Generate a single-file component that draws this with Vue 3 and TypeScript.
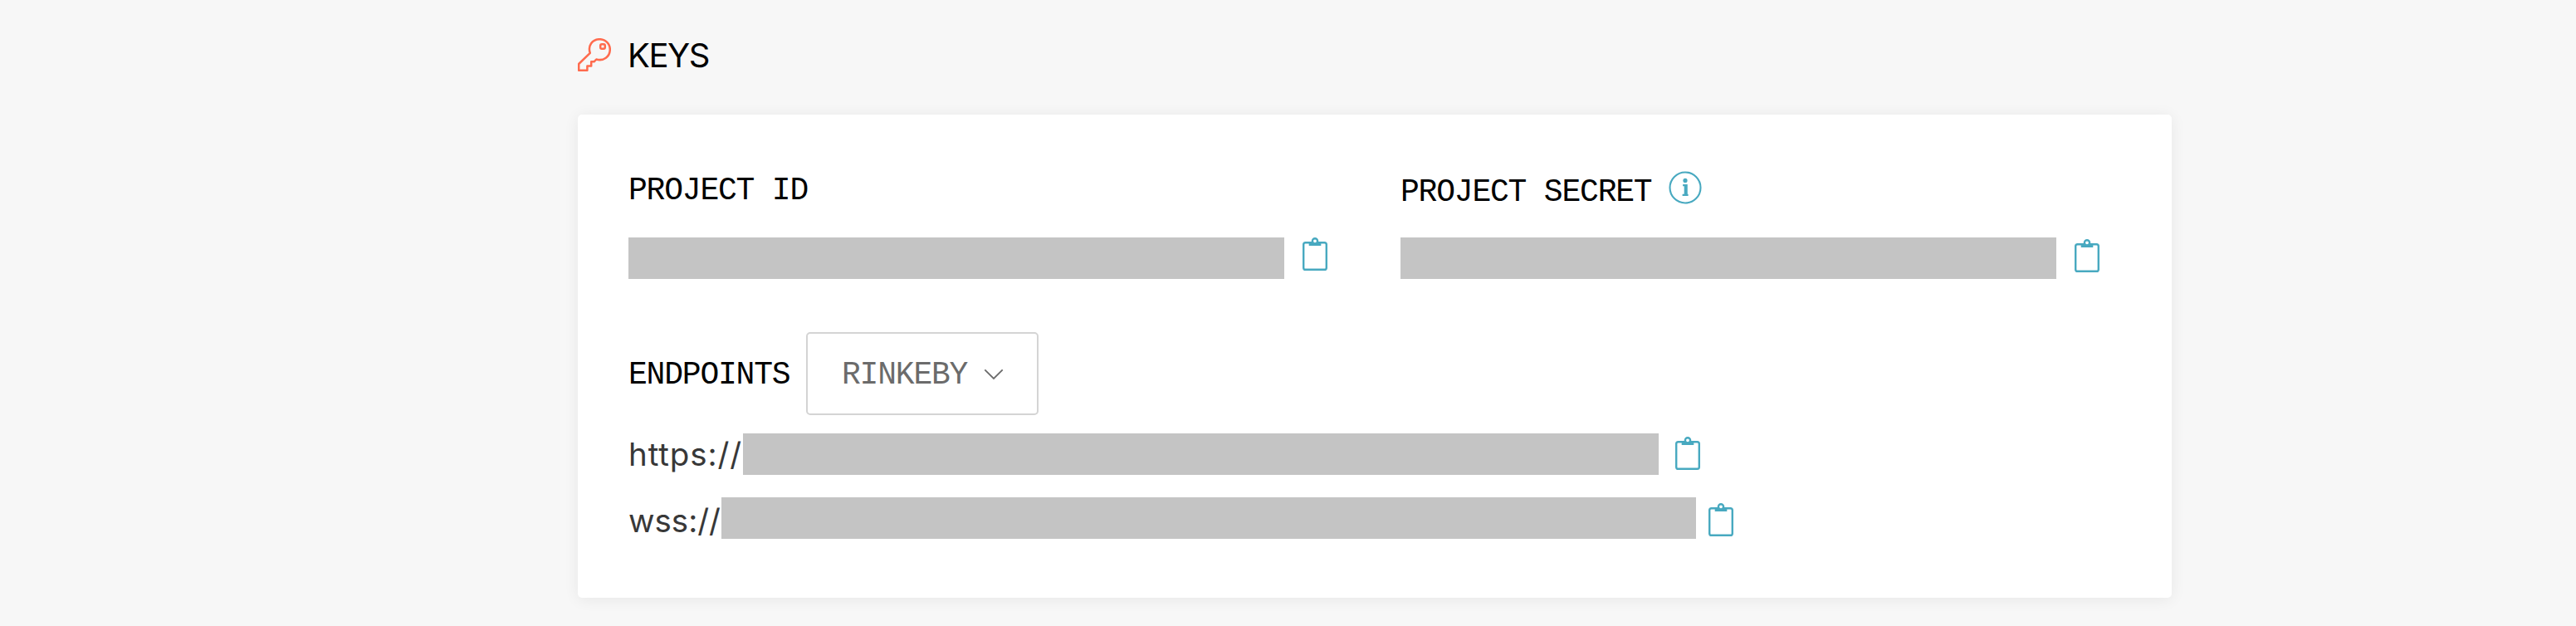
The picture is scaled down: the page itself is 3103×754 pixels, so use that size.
<script setup lang="ts">
import { h, type FunctionalComponent } from 'vue'

interface Endpoint {
  scheme: string
  kind: string
}

const endpoints: Endpoint[] = [
  { scheme: 'https://', kind: 'https' },
  { scheme: 'wss://', kind: 'wss' },
]

const ClipboardIcon: FunctionalComponent = () =>
  h('svg', { width: 30, height: 40, viewBox: '0 0 30 40', fill: 'none' }, [
    h('rect', { x: 1.2, y: 6.2, width: 27.6, height: 32.6, rx: 2.4, stroke: '#48a9c0', 'stroke-width': 2.4 }),
    h('path', { d: 'M7.7 5.2H22.3V10H7.7Z', fill: '#48a9c0' }),
    h('circle', { cx: 15, cy: 4.3, r: 3.1, fill: '#fff', stroke: '#48a9c0', 'stroke-width': 2.4 }),
  ])
</script>

<template>
  <main class="page">
    <header class="title">
      <svg class="key" width="40" height="40" viewBox="0 0 40 40" fill="none" stroke="#ff6b4e" stroke-width="2.5" stroke-linejoin="round">
        <path d="M14.8 17.8C11.8 9.2 17.4 1.2 26.3 1.2C33.4 1.2 38.8 6.8 38.8 13.6C38.8 22.1 31 28 22.3 25.5L19.6 28.3H16.2V33.4H11.4V38.8H1.2V31Z" />
        <rect x="27.2" y="7.2" width="5.6" height="5.6" rx="1.8" />
      </svg>
      <h1>KEYS</h1>
    </header>

    <section class="card">
      <div class="credentials">
        <div class="credential">
          <h2 class="label">PROJECT ID</h2>
          <div class="value">
            <span class="bar"></span>
            <ClipboardIcon />
          </div>
        </div>
        <div class="credential secret">
          <div class="heading">
            <h2 class="label">PROJECT SECRET</h2>
            <svg class="info" width="40" height="40" viewBox="0 0 40 40">
              <circle cx="20" cy="20" r="18.5" fill="none" stroke="#48a9c0" stroke-width="2.1" />
              <circle cx="20" cy="11.4" r="2.6" fill="#48a9c0" />
              <path d="M17.1 17.1H21.6V28.8M16.6 28.8H23.6" fill="none" stroke="#48a9c0" stroke-width="2.3" />
              <path d="M18.7 17H22V29H18.7Z" fill="#48a9c0" />
            </svg>
          </div>
          <div class="value">
            <span class="bar"></span>
            <ClipboardIcon />
          </div>
        </div>
      </div>

      <div class="network">
        <h2 class="label">ENDPOINTS</h2>
        <button class="select" type="button">
          <span class="label">RINKEBY</span>
          <svg width="24" height="14" viewBox="0 0 24 14" fill="none" stroke="#6b6b6b" stroke-width="1.8">
            <path d="M1.3 1.3L12 12L22.7 1.3" />
          </svg>
        </button>
      </div>

      <div v-for="e in endpoints" :key="e.kind" class="endpoint" :class="e.kind">
        <span class="scheme">{{ e.scheme }}</span>
        <span class="bar"></span>
        <ClipboardIcon />
      </div>
    </section>
  </main>
</template>

<style>
body {
  background: #f7f7f7;
}
</style>

<style scoped>
.page {
  box-sizing: border-box;
  width: 3103px;
  height: 754px;
  padding: 41px 487px 0 696px;
  overflow: hidden;
  background: #f7f7f7;
  font-family: Inter, 'Liberation Sans', sans-serif;
}
svg {
  display: block;
  flex: none;
}
h1,
h2 {
  margin: 0;
  font-weight: 400;
}
.title {
  display: flex;
  height: 97px;
}
.key {
  margin-top: 5px;
}
h1 {
  margin-left: 20px;
  padding-top: 1px;
  font-size: 40px;
  line-height: 50px;
  letter-spacing: -1.4px;
  color: #000;
}
.card {
  box-sizing: border-box;
  width: 1920px;
  height: 582px;
  padding: 66px 0 0 61px;
  border-radius: 5px;
  background: #fff;
  box-shadow: 0 2px 18px rgba(0, 0, 0, 0.07);
}
.label {
  box-sizing: border-box;
  font-family: 'Liberation Mono', monospace;
  font-size: 38px;
  font-weight: 400;
  line-height: 50px;
  letter-spacing: -1.2px;
  white-space: nowrap;
  color: #000;
}
.credentials {
  display: grid;
  grid-template-columns: 930px 930px;
  height: 196px;
}
.credential > .label {
  height: 82px;
  padding-top: 1px;
}
.heading {
  display: flex;
  height: 82px;
}
.heading .label {
  width: 323px;
  padding-top: 3px;
}
.info {
  margin-top: 2px;
}
.value {
  display: flex;
  gap: 22px;
}
.secret .value svg {
  margin-top: 2px;
}
.bar {
  flex: none;
  width: 790px;
  height: 50px;
  background: #c4c4c4;
}
.network {
  display: flex;
  height: 122px;
}
.network > .label {
  width: 214px;
  padding-top: 27px;
}
.select {
  box-sizing: border-box;
  display: flex;
  width: 280px;
  height: 100px;
  padding: 25px 0 0 41px;
  border: 2px solid #d4d4d4;
  border-radius: 5px;
  background: #fff;
}
.select .label {
  width: 171px;
  text-align: left;
  color: #6b6b6b;
}
.select svg {
  margin-top: 17px;
}
.endpoint {
  display: flex;
}
.scheme {
  width: 138px;
  font-size: 38.5px;
  line-height: 50px;
  letter-spacing: 0.9px;
  white-space: nowrap;
  color: #383838;
}
.https {
  height: 77px;
}
.https .bar {
  width: 1103px;
}
.https svg {
  margin: 4px 0 0 20px;
}
.wss .scheme {
  width: 112px;
  padding-top: 3px;
  letter-spacing: 0;
}
.wss .bar {
  width: 1174px;
}
.wss svg {
  margin: 7px 0 0 15px;
}
</style>
